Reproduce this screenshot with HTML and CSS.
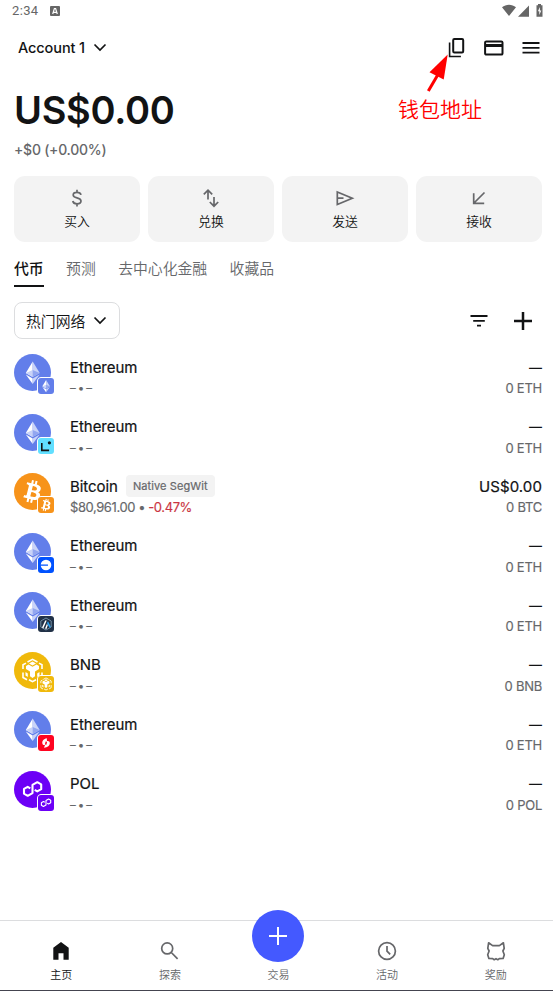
FILE: index.html
```html
<!DOCTYPE html>
<html lang="zh-CN">
<head>
<meta charset="utf-8">
<meta name="viewport" content="width=device-width, initial-scale=1">
<title>Wallet</title>
<link rel="stylesheet" href="styles.css">
</head>
<body>
<svg class="defs" width="0" height="0">
  <symbol id="eth" viewBox="0 0 37 37">
    <rect width="37" height="37" fill="#627eea"/>
    <path d="M18.7 7.5 11.8 19l6.9 4z" fill="#fff"/><path d="M18.7 7.5 25.7 19l-7 4z" fill="#c9d3f8"/>
    <path d="m11.8 19 6.9-3v7z" fill="#c9d3f8"/><path d="m25.7 19-7-3v7z" fill="#92a6f0"/>
    <path d="m11.8 20.5 6.9 4v5.4z" fill="#fff"/><path d="m25.7 20.5-7 4v5.4z" fill="#c9d3f8"/>
  </symbol>
  <symbol id="btc" viewBox="0 0 32 32">
    <rect width="32" height="32" fill="#f7931a"/>
    <path fill="#fff" d="M23.2 14c.3-2.1-1.3-3.2-3.5-4l.7-2.8-1.7-.5-.7 2.8-1.4-.3.7-2.8-1.7-.4-.7 2.8-3.5-.9-.5 1.9s1.3.3 1.2.3c.7.2.8.6.8 1l-2 7.9c-.1.2-.3.5-.8.4l-1.2-.3-.9 1.9 3.5.9-.7 2.9 1.7.4.7-2.8 1.4.3-.7 2.8 1.7.5.7-2.9c2.9.6 5.1.3 6-2.3.8-2.1 0-3.3-1.5-4.1 1.1-.3 1.9-1 2.2-2.6zm-3.9 5.5c-.5 2.1-4.1 1-5.2.7l.9-3.7c1.2.3 4.9.8 4.3 3zm.5-5.5c-.5 1.9-3.4.9-4.4.7l.9-3.4c.9.2 4 .7 3.5 2.7z"/>
  </symbol>
  <symbol id="bnb" viewBox="0 0 37 37">
    <rect width="37" height="37" fill="#f0b90b"/>
    <g fill="none" stroke="#fff" stroke-width="1.6"><path d="m13.5 10 5-2.7 5 2.7M9 17v-4.2l3-1.7m13 0 3 1.7V17M9 20.5v5l4 2.3m15-7.3v5l-4 2.3M15 27.7l3.5 2 3.5-2"/></g>
    <path d="m12 14 2.5-1.5 4 2.3 4-2.3L25 14v3l-4 2.4v4.8L18.5 26 16 24.2v-4.8L12 17z" fill="#fff"/>
    <path d="m15 11.5 3.5-2 3.5 2-3.5 2zM11.5 20l2.3 1.4V25l-2.3-1.4zm14 0-2.3 1.4V25l2.3-1.4z" fill="#fff"/>
  </symbol>
  <symbol id="pol" viewBox="0 0 37 37">
    <rect width="37" height="37" fill="#6c00f6"/>
    <path d="m16.300 17.300-2.600-1.500-3.700 2.100v4.800l3.700 2.100 4.800-2.700v-8.200l4.800-2.700 3.900 2.200v4.800l-3.900 2.200-2.600-1.500" fill="none" stroke="#fff" stroke-width="2.100" stroke-linejoin="round"/>
  </symbol>
  <symbol id="linea" viewBox="0 0 16 16"><rect width="16" height="16" fill="#61dfff"/><path d="M3.800 5v7.400h7.300" fill="none" stroke="#121212" stroke-width="1.600"/><circle cx="11.400" cy="4.800" r="1.600" fill="#121212"/></symbol>
  <symbol id="base" viewBox="0 0 16 16"><rect width="16" height="16" fill="#0052ff"/><circle cx="8" cy="8" r="5.300" fill="#fff"/><path d="M2 7.400h8v1.300H2z" fill="#0052ff"/></symbol>
  <symbol id="arb" viewBox="0 0 16 16"><rect width="16" height="16" fill="#213147"/><path d="m8 2 5.200 3v6L8 14l-5.200-3V5z" fill="#213147" stroke="#7896ad" stroke-width=".9"/><path d="m4 11.500 3.200-7h1.500l-3.400 8zM7 12.500l2-4.800.8 1.500-1.300 3.800z" fill="#fff"/><path d="m9 7 1-1.800 2.800 5.500-1.300 1z" fill="#28a0f0"/></symbol>
  <symbol id="op" viewBox="0 0 16 16"><rect width="16" height="16" fill="#ff0420"/><path d="M8.800 3.200C5.800 3.600 4 6 4.300 8.200c.2 1.400 1.400 2.200 2.700 1.800l-1 2.800c3.600-.2 6-2.300 5.800-5-.1-1.400-1.300-2.200-2.800-1.700z" fill="#fff"/><path d="m7.600 6.500 1.500.2-.7 3-1.500-.2z" fill="#ff0420"/></symbol>
</svg>

<div class="screen">
  <div class="status">
    <span>2:34</span>
    <svg class="badge-a" width="10" height="10" viewBox="0 0 10 10"><rect width="10" height="10" rx="1" fill="#666"/><path d="m2.700 8 1.700-5.500h1.200L7.300 8M3.400 6.300h3.200" fill="none" stroke="#fff" stroke-width="1.200"/></svg>
    <svg class="signals" width="43" height="14" viewBox="0 0 43 14" fill="#666"><path d="M0 3.200C4-.2 10-.2 14 3.200L7 12zM16 12.700 27 1.500v11.200z"/><path d="M34.500 1.300H36V0h3v1.300h1.500v11.500h-6z"/><path d="m37.900 3-2 4.200h1.400v3.700l2-4.500h-1.400z" fill="#fff"/></svg>
  </div>

  <header class="header">
    <span class="account">Account 1</span>
    <svg class="chev" width="14" height="9" viewBox="0 0 14 9"><path d="m1.500 1.500 5.500 5.500 5.500-5.500"/></svg>
    <div class="tools">
      <svg width="18" height="20" viewBox="0 0 18 20"><rect x="5.200" y="1" width="10" height="13.400" rx="1.200"/><path d="M1.600 4.500v14h11.300" stroke-width="1.600"/></svg>
      <svg width="20" height="16" viewBox="0 0 20 16"><rect x="1.100" y="1.400" width="17.400" height="13.200" rx="1.200"/><path d="M1 5.500h18" stroke-width="3"/></svg>
      <svg width="18" height="12" viewBox="0 0 18 12"><path d="M.5 1h17M.5 5.800h17M.5 10.600h17" stroke-width="1.800"/></svg>
    </div>
    <svg class="arrow" width="24" height="40" viewBox="0 0 24 40"><path d="m2.300 37 10-17" stroke="red" stroke-width="3"/><path d="M21.700.5 3.500 18.200 17.700 25.500z" fill="red"/></svg>
    <span class="note">钱包地址</span>
  </header>

  <section class="balance">
    <h1>US$0.00</h1>
    <p>+$0 (+0.00%)</p>
  </section>

  <div class="actions">
    <button><svg width="20" height="20" viewBox="0 0 20 20"><path d="M14 6.900C13.600 5.200 12.300 4.400 10 4.400S6.200 5.400 6.200 7c0 4 7.800 1.700 7.800 6 0 1.800-1.600 2.800-4 2.800S6.100 14.700 5.800 13M10 1.700v2.700m0 11.400v2.700"/></svg>买入</button>
    <button><svg width="20" height="20" viewBox="0 0 20 20"><path d="M7 11.500V2.500M2.800 6.300 7 2.100l4.200 4.200M13 9v9M8.800 14l4.200 4.200 4.200-4.200"/></svg>兑换</button>
    <button><svg width="20" height="20" viewBox="0 0 20 20"><path d="M2.300 4v12.500L17.300 10.200zM3 10.200h5.500"/></svg>发送</button>
    <button><svg width="20" height="20" viewBox="0 0 20 20"><path d="M15.500 4.500 5 15M4.700 5.200v10.200h10.500"/></svg>接收</button>
  </div>

  <nav class="tabs"><a class="on">代币</a><a>预测</a><a>去中心化金融</a><a>收藏品</a></nav>

  <div class="filter">
    <button>热门网络<svg class="chev" width="14" height="9" viewBox="0 0 14 9"><path d="m1.500 1.500 5.500 5.500 5.500-5.500"/></svg></button>
    <svg class="sort" width="18" height="12" viewBox="0 0 18 12"><path d="M.5 1h17M3.200 5.800h11.600M7 10.600h4"/></svg>
    <svg class="add" width="18" height="18" viewBox="0 0 18 18"><path d="M9 0v18M0 9h18"/></svg>
  </div>

  <ul class="tokens">
    <li><div class="coin"><svg><use href="#eth"/></svg><svg class="net large"><use href="#eth"/></svg></div><div class="info"><b>Ethereum</b><small class="none">– • –</small></div><div class="value"><b class="dash">—</b><small>0 ETH</small></div></li>
    <li><div class="coin"><svg><use href="#eth"/></svg><svg class="net"><use href="#linea"/></svg></div><div class="info"><b>Ethereum</b><small class="none">– • –</small></div><div class="value"><b class="dash">—</b><small>0 ETH</small></div></li>
    <li><div class="coin"><svg><use href="#btc"/></svg><svg class="net large"><use href="#btc"/></svg></div><div class="info"><b>Bitcoin<span class="tag">Native SegWit</span></b><small class="price">$80,961.00 • <em>-0.47%</em></small></div><div class="value"><b class="usd">US$0.00</b><small>0 BTC</small></div></li>
    <li><div class="coin"><svg><use href="#eth"/></svg><svg class="net"><use href="#base"/></svg></div><div class="info"><b>Ethereum</b><small class="none">– • –</small></div><div class="value"><b class="dash">—</b><small>0 ETH</small></div></li>
    <li><div class="coin"><svg><use href="#eth"/></svg><svg class="net"><use href="#arb"/></svg></div><div class="info"><b>Ethereum</b><small class="none">– • –</small></div><div class="value"><b class="dash">—</b><small>0 ETH</small></div></li>
    <li><div class="coin"><svg><use href="#bnb"/></svg><svg class="net large"><use href="#bnb"/></svg></div><div class="info"><b>BNB</b><small class="none">– • –</small></div><div class="value"><b class="dash">—</b><small>0 BNB</small></div></li>
    <li><div class="coin"><svg><use href="#eth"/></svg><svg class="net"><use href="#op"/></svg></div><div class="info"><b>Ethereum</b><small class="none">– • –</small></div><div class="value"><b class="dash">—</b><small>0 ETH</small></div></li>
    <li><div class="coin"><svg><use href="#pol"/></svg><svg class="net large"><use href="#pol"/></svg></div><div class="info"><b>POL</b><small class="none">– • –</small></div><div class="value"><b class="dash">—</b><small>0 POL</small></div></li>
  </ul>

  <footer class="bottom">
    <a class="on"><svg width="22" height="22" viewBox="0 0 22 22"><path d="M3.300 19.700V7.700L11 2l7.700 5.700v12h-5.200v-6.500h-5v6.500z" fill="#121314" stroke="none"/></svg>主页</a>
    <a><svg width="22" height="22" viewBox="0 0 22 22"><circle cx="8.200" cy="8.400" r="5.500"/><path d="m12.300 12.500 6.300 6.300"/></svg>探索</a>
    <a class="trade"><span class="fab"><svg width="18" height="18" viewBox="0 0 18 18"><path d="M9 0v18M0 9h18"/></svg></span>交易</a>
    <a><svg width="22" height="22" viewBox="0 0 22 22"><circle cx="11" cy="11" r="8.400"/><path d="M11 6v5.200l3.200 3.200"/></svg>活动</a>
    <a><svg width="22" height="22" viewBox="0 0 22 22"><path d="M3.600 2.800 7.600 5.600h6.800l4-2.800.8 5.600-1.300 2.600 1.400 3.700-1.200 3.700-3.800.2-1.500 1.100-1.800-1-1.800 1-1.500-1.100-3.800-.2-1.200-3.700L4.100 11 2.800 8.400z" stroke-linejoin="round"/></svg>奖励</a>
  </footer>
</div>
</body>
</html>
```

FILE: styles.css
```css
* { box-sizing: border-box; }
body { margin: 0; background: #fff; color: #121314; font-family: Inter, "Noto Sans CJK SC", sans-serif; }
button { font: inherit; color: inherit; border: 0; padding: 0; }
svg { display: block; flex: none; }
.defs { position: absolute; }
.screen { width: 553px; height: 991px; display: flex; flex-direction: column; overflow: hidden; border-bottom: 1px solid #44444f; }

.status { height: 21px; padding: 0 9px 0 12px; display: flex; align-items: center; color: #666; font: 13px/21px Roboto, sans-serif; letter-spacing: .35px; }
.badge-a { margin-left: 12px; }
.signals { margin-left: auto; margin-right: -1px; }

.header { position: relative; height: 53px; padding: 0 13px 0 18px; display: flex; align-items: center; }
.account { font-size: 14.5px; font-weight: 450; letter-spacing: -.1px; }
.chev { margin-left: 8px; fill: none; stroke: #121314; stroke-width: 1.7; }
.tools { margin-left: auto; display: flex; align-items: center; gap: 18px; fill: none; stroke: #121314; stroke-width: 2; }
.arrow { position: absolute; left: 426px; top: 33px; }
.note { position: absolute; left: 398px; top: 74px; color: red; font-size: 21px; line-height: 30px; font-weight: 350; }

.balance { height: 102px; padding: 13px 14px 0; }
h1 { margin: 0; font-size: 38px; line-height: 46px; font-weight: 600; letter-spacing: -.3px; }
.balance p { margin: 8px 0 0; color: #66676a; font-size: 14px; line-height: 18px; font-weight: 450; letter-spacing: -.25px; }

.actions { display: grid; grid-template-columns: repeat(4, 1fr); gap: 8px; padding: 0 11px 0 14px; }
.actions button { height: 66px; border-radius: 11px; background: #f3f3f3; display: flex; flex-direction: column; align-items: center; padding-top: 12px; gap: 3px; font-size: 12.8px; line-height: 21px; font-weight: 350; }
.actions svg { fill: none; stroke: #66676a; stroke-width: 1.7; }

.tabs { display: flex; gap: 22.4px; padding: 0 14px; height: 45px; font-size: 14.85px; line-height: 23px; color: #66676a; font-weight: 350; }
.tabs a { height: 45px; padding-top: 16px; }
.tabs .on { color: #121314; font-weight: 500; border-bottom: 2px solid #121314; }

.filter { margin: 15px 21px 0 14px; height: 37px; display: flex; align-items: center; }
.filter button { width: 106px; height: 37px; padding-left: 11px; display: flex; align-items: center; background: #fff; border: 1px solid #dcdddf; border-radius: 8px; font-size: 14.85px; font-weight: 350; }
.filter button .chev { margin-left: 8px; }
.sort { margin-left: auto; stroke: #121314; stroke-width: 1.8; }
.add { margin-left: 26px; stroke: #121314; stroke-width: 2.5; }

.tokens { list-style: none; margin: 7px 0 0; padding: 0 11px 0 14px; flex: 1; }
.tokens li { height: 59.5px; display: flex; padding-top: 8px; }
.coin { position: relative; width: 37px; height: 37px; margin-right: 19px; }
.coin > svg { width: 37px; height: 37px; border-radius: 50%; }
.coin > .net { position: absolute; left: 23px; top: 23px; width: 18px; height: 18px; border: 1px solid #fff; border-radius: 4px; background: #fff; }
.large use { transform: scale(1.25); transform-origin: 8px 8px; }
.info, .value { display: flex; flex-direction: column; padding-top: 3px; }
.value { margin-left: auto; align-items: flex-end; }
.tokens b { display: flex; align-items: center; height: 20px; margin-bottom: 1px; font-size: 15px; font-weight: 400; letter-spacing: -.05px; -webkit-text-stroke: .2px; }
.tokens .dash { font-size: 13px; font-weight: 500; height: 19px; margin-bottom: 2px; -webkit-text-stroke: 0; }
.tokens .usd { letter-spacing: .1px; }
.tokens small { height: 20px; font-size: 13px; line-height: 20px; font-weight: 400; letter-spacing: -.25px; color: #66676a; white-space: nowrap; -webkit-text-stroke: .15px; }
.tokens .none { font-size: 11.5px; letter-spacing: -.8px; word-spacing: .4px; }
.tokens .price { letter-spacing: -.42px; }
.tokens em { font-style: normal; color: #ca3542; }
.tag { margin-left: 8px; height: 22px; padding: 0 7px; border-radius: 4px; background: #f3f3f3; color: #66676a; font-size: 11px; line-height: 22px; font-weight: 400; letter-spacing: .1px; }

.bottom { height: 70px; border-top: 1px solid #dcdddf; padding: 0 3px 0 7px; display: grid; grid-template-columns: repeat(5, 1fr); }
.bottom a { display: flex; flex-direction: column; align-items: center; padding-top: 19px; gap: 4px; font-size: 11px; line-height: 18px; color: #66676a; font-weight: 350; }
.bottom .on { color: #121314; }
.bottom svg { fill: none; stroke: #66676a; stroke-width: 1.7; }
.bottom .trade { padding: 0; margin-top: -11px; gap: 4px; }
.fab { width: 52px; height: 52px; border-radius: 50%; background: #4459ff; display: grid; place-items: center; }
.bottom .fab svg { stroke: #fff; stroke-width: 2; }
```
